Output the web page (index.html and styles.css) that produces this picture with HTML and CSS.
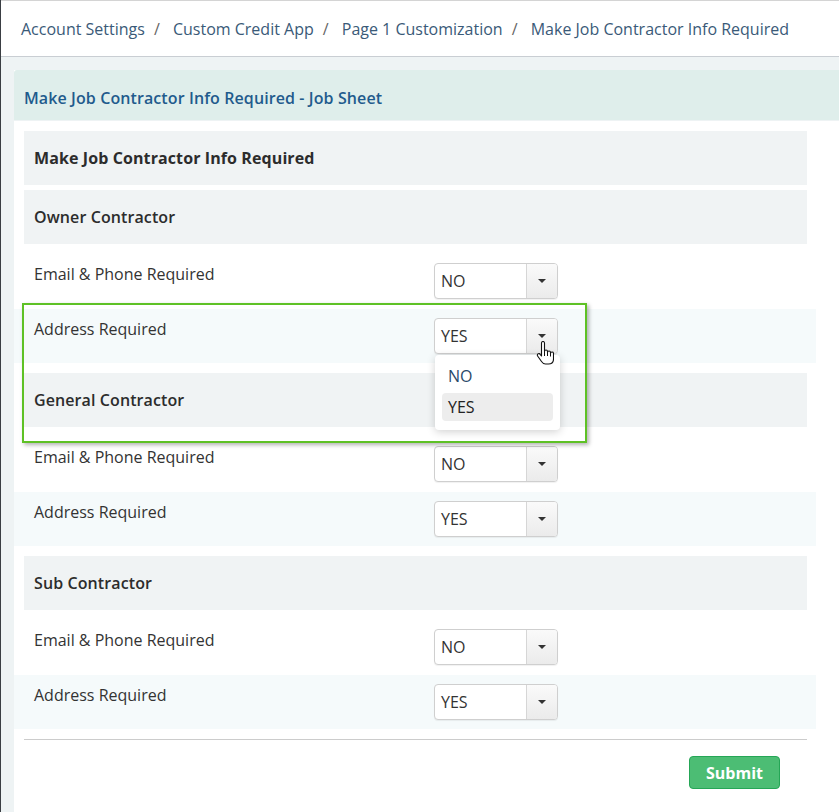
FILE: index.html
```html
<!DOCTYPE html>
<html lang="en">
<head>
    <meta charset="UTF-8">
    <meta name="viewport" content="width=device-width, initial-scale=1.0">
    <title>Make Job Contractor Info Required</title>
    <link rel="stylesheet" href="styles.css">
</head>
<body>
    <div class="app">
        <div class="breadcrumb">
            <a href="#">Account Settings</a><span class="sep">/</span>
            <a href="#">Custom Credit App</a><span class="sep">/</span>
            <a href="#">Page 1 Customization</a><span class="sep">/</span>
            <span class="current">Make Job Contractor Info Required</span>
        </div>

        <div class="content">
            <div class="panel">
                <div class="panel-heading">Make Job Contractor Info Required - Job Sheet</div>
                <div class="panel-body">
                    <div class="section-title main">Make Job Contractor Info Required</div>

                    <div class="group">
                        <div class="section-title">Owner Contractor</div>
                        <div class="field">
                            <div class="label">Email &amp; Phone Required</div>
                            <div class="select"><span class="value">NO</span><span class="caret-box"><span class="caret"></span></span></div>
                        </div>
                        <div class="field alt">
                            <div class="label">Address Required</div>
                            <div class="select open">
                                <span class="value">YES</span><span class="caret-box"><span class="caret"></span></span>
                                <div class="menu">
                                    <div class="option">NO</div>
                                    <div class="option active">YES</div>
                                </div>
                                <svg class="cursor" width="18" height="24" viewBox="0 0 18 24">
                                    <path d="M5.5 2a1.5 1.5 0 0 1 3 0v8.5a1.5 1.5 0 0 1 3 0v1a1.5 1.5 0 0 1 3 0v1a1.5 1.5 0 0 1 3 0V18c0 3-2 5-5 5H9.5c-2 0-3-1-4-2.5L1.6 15a1.5 1.5 0 0 1 2.5-1.7L5.5 15z" fill="#fff" stroke="#111" stroke-width="1.1" stroke-linejoin="round"/>
                                    <path d="M8.5 11v4M11.5 12v3M14.5 13v2.5" stroke="#111" stroke-width="1"/>
                                </svg>
                            </div>
                        </div>
                    </div>

                    <div class="group">
                        <div class="section-title">General Contractor</div>
                        <div class="field">
                            <div class="label">Email &amp; Phone Required</div>
                            <div class="select"><span class="value">NO</span><span class="caret-box"><span class="caret"></span></span></div>
                        </div>
                        <div class="field alt">
                            <div class="label">Address Required</div>
                            <div class="select"><span class="value">YES</span><span class="caret-box"><span class="caret"></span></span></div>
                        </div>
                    </div>

                    <div class="group">
                        <div class="section-title">Sub Contractor</div>
                        <div class="field">
                            <div class="label">Email &amp; Phone Required</div>
                            <div class="select"><span class="value">NO</span><span class="caret-box"><span class="caret"></span></span></div>
                        </div>
                        <div class="field alt">
                            <div class="label">Address Required</div>
                            <div class="select"><span class="value">YES</span><span class="caret-box"><span class="caret"></span></span></div>
                        </div>
                    </div>

                    <div class="form-footer">
                        <button class="btn-submit">Submit</button>
                    </div>
                </div>
            </div>
        </div>

        <!-- annotation frame round the open dropdown -->
        <div class="callout"></div>
    </div>
</body>
</html>
```

FILE: styles.css
```css
body {
    margin: 0;
    font-family: "Open Sans", "Noto Sans", sans-serif;
    color: #333;
    background-color: #eef3f4;
    overflow: hidden;
}
.app {
    position: relative;
    min-height: 812px;
    border-left: 1px solid #3a3e43;
}
.breadcrumb {
    background-color: #fff;
    border-top: 1px solid #d4d4d4;
    border-bottom: 1px solid #c9ced3;
    padding: 17px 20px 16px;
    font-size: 16px;
    line-height: 22px;
    white-space: nowrap;
}
.breadcrumb a,
.breadcrumb .current {
    color: #3a5a78;
    text-decoration: none;
}
.breadcrumb .sep {
    color: #666;
    margin: 0 9px;
}
.content {
    padding: 13px 0 0 13px;
}
.panel {
    background-color: #fff;
}
.panel-heading {
    background-color: #dfeeeb;
    color: #1f5b8d;
    font-size: 16px;
    font-weight: 600;
    letter-spacing: 0.1px;
    line-height: 22px;
    height: 51px;
    box-sizing: border-box;
    padding: 17px 10px 0;
    border-radius: 3px 0 0 0;
    border-bottom: 1px solid #eef3f4;
}
.panel-body {
    padding: 10px 32px 40px 10px;
}
.section-title {
    background-color: #f0f3f4;
    height: 54px;
    display: flex;
    align-items: center;
    padding: 0 10px;
    font-size: 16px;
    font-weight: 600;
    letter-spacing: 0.1px;
    color: #2c2c2c;
    margin-bottom: 10px;
}
.section-title.main {
    font-weight: 700;
    margin-bottom: 5px;
}
.group {
    margin-bottom: 10px;
}
.field {
    display: grid;
    grid-template-columns: 400px 124px;
    align-items: start;
    height: 54px;
    box-sizing: border-box;
    padding: 9px 0 0 20px;
    margin: 0 -9px 0 -10px;
    font-size: 16px;
}
.field + .field {
    margin-top: 1px;
}
.field.alt {
    background-color: #f5fafb;
}
.label {
    line-height: 22px;
    color: #333;
}
.select {
    position: relative;
    display: flex;
    height: 36px;
    box-sizing: border-box;
    border: 1px solid #cfcfcf;
    border-radius: 4px;
    background-color: #fff;
    box-shadow: 0 1px 1px rgba(0, 0, 0, 0.06);
}
.select .value {
    flex: 1;
    padding: 0 6px;
    line-height: 34px;
    font-size: 16px;
    color: #333;
}
.caret-box {
    width: 30px;
    border-left: 1px solid #d6d6d6;
    border-radius: 0 3px 3px 0;
    background: linear-gradient(#fafafa, #ebebeb);
    display: flex;
    align-items: center;
    justify-content: center;
}
.caret {
    width: 0;
    height: 0;
    border-left: 4px solid transparent;
    border-right: 4px solid transparent;
    border-top: 4px solid #333;
}
.menu {
    position: absolute;
    top: 36px;
    left: 0;
    width: 125px;
    box-sizing: border-box;
    padding: 7px 7px 9px;
    background-color: #fff;
    border-radius: 4px;
    box-shadow: 0 2px 8px rgba(0, 0, 0, 0.18);
    z-index: 5;
}
.option {
    height: 28px;
    line-height: 28px;
    padding: 0 6px;
    font-size: 16px;
    color: #2a4a6a;
    border-radius: 4px;
}
.option + .option {
    margin-top: 3px;
}
.option.active {
    background-color: #ededed;
    color: #222;
}
.cursor {
    position: absolute;
    left: 101px;
    top: 22px;
    z-index: 6;
}
.form-footer {
    border-top: 1px solid #cccccc;
    margin-top: 10px;
    padding-top: 16px;
    display: flex;
    justify-content: flex-end;
    padding-right: 27px;
}
.btn-submit {
    font-family: "Open Sans", "Noto Sans", sans-serif;
    font-size: 16px;
    font-weight: 700;
    color: #fff;
    background-color: #4cbd74;
    border: 1px solid #25a656;
    border-radius: 4px;
    width: 91px;
    height: 33px;
    padding: 0;
}
.callout {
    position: absolute;
    left: 21px;
    top: 303px;
    width: 565px;
    height: 140px;
    box-sizing: border-box;
    border: 2px solid #5ec125;
    box-shadow: 2px 2px 4px rgba(0, 0, 0, 0.3);
    z-index: 4;
    pointer-events: none;
}
```
